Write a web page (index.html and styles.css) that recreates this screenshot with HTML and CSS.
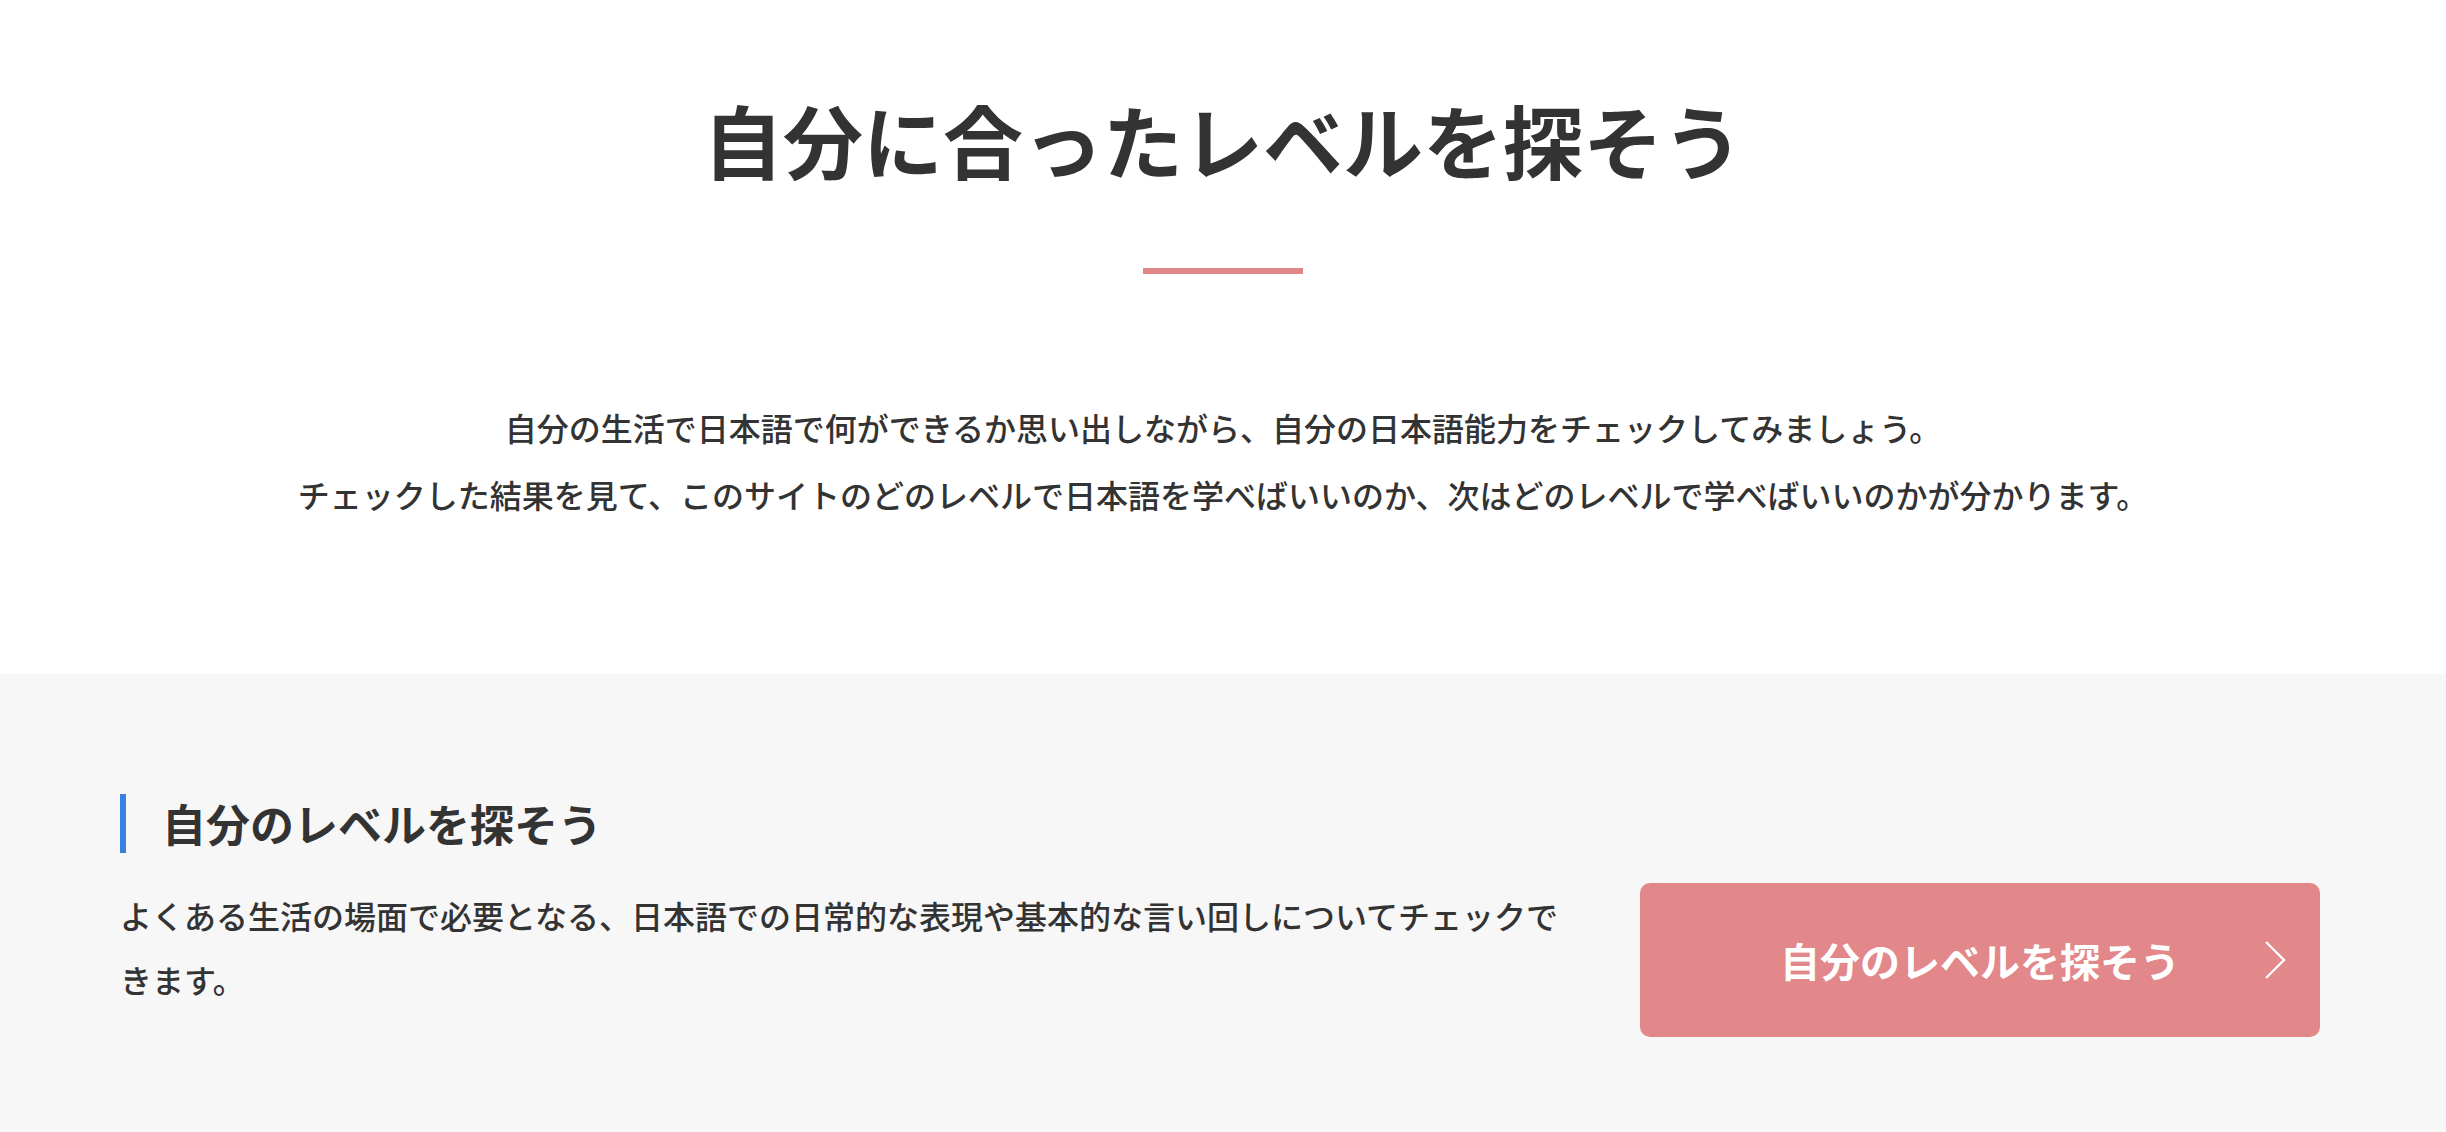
FILE: index.html
```html
<!DOCTYPE html>
<html lang="ja">
<head>
    <meta charset="UTF-8">
    <meta name="viewport" content="width=device-width, initial-scale=1.0">
    <title>自分に合ったレベルを探そう</title>
    <link rel="stylesheet" href="styles.css">
</head>
<body>
    <section class="intro">
        <h1 class="intro-title">自分に合ったレベルを探そう</h1>
        <span class="intro-line"></span>
        <p class="intro-text">
            自分の生活で日本語で何ができるか思い出しながら、自分の日本語能力をチェックしてみましょう。<br>
            チェックした結果を見て、このサイトのどのレベルで日本語を学べばいいのか、次はどのレベルで学べばいいのかが分かります。
        </p>
    </section>

    <section class="check">
        <h2 class="check-title">自分のレベルを探そう</h2>
        <div class="check-row">
            <p class="check-text">よくある生活の場面で必要となる、日本語での日常的な表現や基本的な言い回しについてチェックできます。</p>
            <a class="check-button" href="#">
                <span>自分のレベルを探そう</span>
                <svg class="check-arrow" width="22" height="38" viewBox="0 0 22 38">
                    <path d="M2 1 L20 19 L2 37" fill="none" stroke="#fff" stroke-width="2.4"/>
                </svg>
            </a>
        </div>
    </section>
</body>
</html>
```

FILE: styles.css
```css
body {
    margin: 0;
    padding: 0;
    font-family: "Noto Sans CJK JP", "Noto Sans", sans-serif;
    color: #333;
    background-color: #fff;
}

/* 上部 */
.intro {
    padding: 82px 0 146px;
    text-align: center;
}

.intro-title {
    margin: 0;
    font-size: 80px;
    line-height: 112px;
    font-weight: 700;
    color: #333;
}

.intro-line {
    display: block;
    width: 160px;
    height: 6px;
    margin: 74px auto 0;
    background-color: #e2868a;
}

.intro-text {
    margin: 120px 0 0;
    font-size: 32px;
    line-height: 67px;
    font-weight: 500;
}

/* チェック */
.check {
    background-color: #f7f7f7;
    padding: 120px 126px 95px 120px;
}

.check-title {
    margin: 0;
    border-left: 6px solid #3a80de;
    padding-left: 36px;
    font-size: 44px;
    line-height: 59px;
    font-weight: 700;
}

.check-row {
    display: flex;
    align-items: flex-start;
    gap: 60px;
    margin-top: 30px;
}

.check-text {
    flex: 1;
    margin: 0;
    font-size: 32px;
    line-height: 64px;
    font-weight: 500;
}

.check-button {
    position: relative;
    flex: 0 0 680px;
    height: 154px;
    display: flex;
    justify-content: center;
    align-items: center;
    background-color: #e2878a;
    border-radius: 10px;
    color: #fff;
    text-decoration: none;
    font-size: 40px;
    font-weight: 700;
}

.check-arrow {
    position: absolute;
    right: 34px;
    top: 58px;
}
```
